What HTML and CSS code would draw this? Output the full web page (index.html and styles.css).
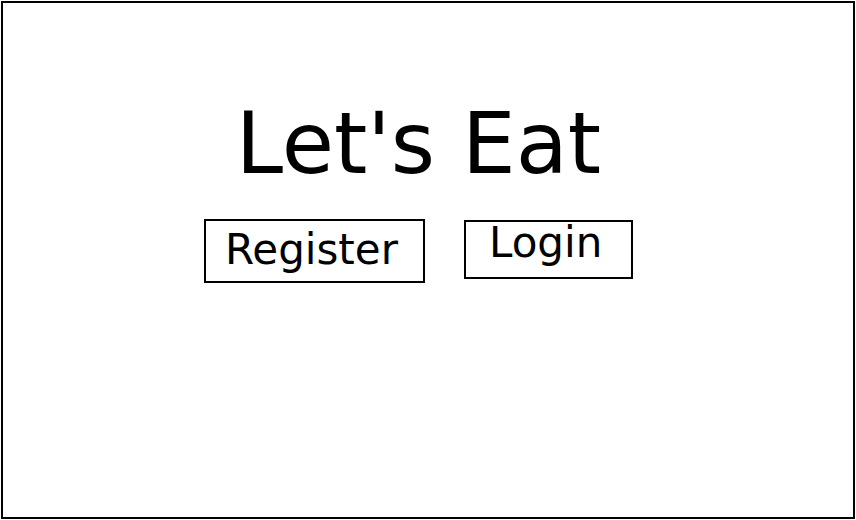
FILE: index.html
```html
<!DOCTYPE html>
<html>
<head>
<meta charset="utf-8">
<link rel="stylesheet" href="styles.css">
</head>
<body>
<div class="frame">
  <h1 class="title">Let's Eat</h1>
  <div class="actions">
    <div class="btn btn-register">Register</div>
    <div class="btn btn-login">Login</div>
  </div>
</div>
</body>
</html>
```
FILE: styles.css
```css
html, body {
  margin: 0;
  padding: 0;
  background: #fff;
}
body {
  font-family: "DejaVu Sans", sans-serif;
  color: #000;
}
.frame {
  box-sizing: border-box;
  width: 854px;
  height: 518px;
  margin: 1px 0 0 1px;
  border: 2px solid #000;
  padding: 91px 19px 0 0;
  display: flex;
  flex-direction: column;
  align-items: center;
}
.title {
  margin: 0;
  font-size: 85px;
  font-weight: normal;
  line-height: 100px;
  white-space: nowrap;
}
.actions {
  margin-top: 25px;
  display: flex;
  align-items: flex-start;
  gap: 39px;
}
.btn {
  box-sizing: border-box;
  border: 2px solid #000;
  white-space: nowrap;
  text-align: left;
  font-size: 42px;
}
.btn-register {
  width: 221px;
  height: 64px;
  padding-left: 19px;
  line-height: 57px;
}
.btn-login {
  width: 169px;
  height: 59px;
  margin-top: 1px;
  padding-left: 23px;
  line-height: 41px;
}
```
